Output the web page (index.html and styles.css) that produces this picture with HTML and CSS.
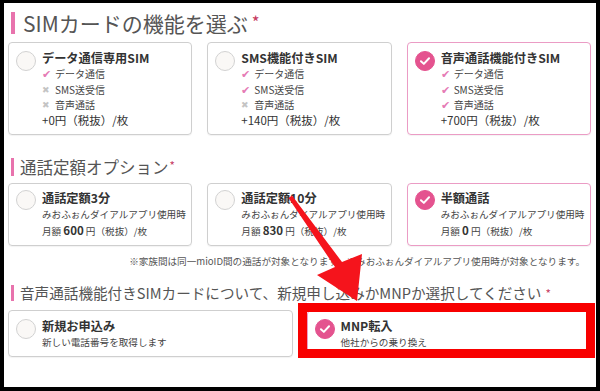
FILE: index.html
```html
<!DOCTYPE html>
<html lang="ja">
<head>
<meta charset="utf-8">
<link rel="stylesheet" href="styles.css">
</head>
<body>
<div class="frame">
  <h2 class="heading h-lg">SIMカードの機能を選ぶ<span class="req">*</span></h2>
  <div class="cards cards-3 row1">
    <div class="card">
      <span class="radio"></span>
      <div class="body">
        <div class="title">データ通信専用SIM</div>
        <div class="feat"><span class="ok">✔</span>データ通信</div>
        <div class="feat"><span class="ng">✖</span>SMS送受信</div>
        <div class="feat"><span class="ng">✖</span>音声通話</div>
        <div class="price">+0円（税抜）/枚</div>
      </div>
    </div>
    <div class="card">
      <span class="radio"></span>
      <div class="body">
        <div class="title">SMS機能付きSIM</div>
        <div class="feat"><span class="ok">✔</span>データ通信</div>
        <div class="feat"><span class="ok">✔</span>SMS送受信</div>
        <div class="feat"><span class="ng">✖</span>音声通話</div>
        <div class="price">+140円（税抜）/枚</div>
      </div>
    </div>
    <div class="card selected">
      <span class="radio on"><svg viewBox="0 0 20 20"><path d="M5.5 10.2 L8.7 13.2 L14.5 7" fill="none" stroke="#fff" stroke-width="2.2" stroke-linecap="round" stroke-linejoin="round"/></svg></span>
      <div class="body">
        <div class="title">音声通話機能付きSIM</div>
        <div class="feat"><span class="ok">✔</span>データ通信</div>
        <div class="feat"><span class="ok">✔</span>SMS送受信</div>
        <div class="feat"><span class="ok">✔</span>音声通話</div>
        <div class="price">+700円（税抜）/枚</div>
      </div>
    </div>
  </div>

  <h2 class="heading h-md">通話定額オプション<span class="req small">*</span></h2>
  <div class="cards cards-3 row2">
    <div class="card">
      <span class="radio"></span>
      <div class="body">
        <div class="title">通話定額3分</div>
        <div class="line">みおふぉんダイアルアプリ使用時</div>
        <div class="line">月額 <b>600</b> 円（税抜）/枚</div>
      </div>
    </div>
    <div class="card">
      <span class="radio"></span>
      <div class="body">
        <div class="title">通話定額10分</div>
        <div class="line">みおふぉんダイアルアプリ使用時</div>
        <div class="line">月額 <b>830</b> 円（税抜）/枚</div>
      </div>
    </div>
    <div class="card selected">
      <span class="radio on"><svg viewBox="0 0 20 20"><path d="M5.5 10.2 L8.7 13.2 L14.5 7" fill="none" stroke="#fff" stroke-width="2.2" stroke-linecap="round" stroke-linejoin="round"/></svg></span>
      <div class="body">
        <div class="title">半額通話</div>
        <div class="line">みおふぉんダイアルアプリ使用時</div>
        <div class="line">月額 <b>0</b> 円（税抜）/枚</div>
      </div>
    </div>
  </div>
  <p class="note">※家族間は同一mioID間の通話が対象となります。※みおふぉんダイアルアプリ使用時が対象となります。</p>

  <h2 class="heading h-sm">音声通話機能付きSIMカードについて、新規申し込みかMNPか選択してください<span class="req">*</span></h2>
  <div class="cards cards-2 row3">
    <div class="card">
      <span class="radio"></span>
      <div class="body">
        <div class="title">新規お申込み</div>
        <div class="line">新しい電話番号を取得します</div>
      </div>
    </div>
    <div class="card selected">
      <span class="radio on"><svg viewBox="0 0 20 20"><path d="M5.5 10.2 L8.7 13.2 L14.5 7" fill="none" stroke="#fff" stroke-width="2.2" stroke-linecap="round" stroke-linejoin="round"/></svg></span>
      <div class="body">
        <div class="title">MNP転入</div>
        <div class="line">他社からの乗り換え</div>
      </div>
    </div>
  </div>

  <div class="highlight"></div>
  <svg class="arrow" viewBox="0 0 600 391" width="600" height="391">
    <path d="M292 195.5 L342 262 L362 254 L357 301 L317 275 L335 267 L288.5 198 Z" fill="#f5141c"/>
  </svg>
</div>
</body>
</html>
```
FILE: styles.css
```css
* { box-sizing: border-box; }
html, body { margin: 0; padding: 0; }
body {
  background: #000;
  width: 600px;
  height: 391px;
  padding: 3px 4px 4px 4px;
  font-family: "Noto Sans CJK JP", "Noto Sans", sans-serif;
  color: #333;
  overflow: hidden;
}
.frame {
  position: relative;
  background: #fff;
  width: 592px;
  height: 384px;
  padding: 0 5px 0 4px;
  overflow: hidden;
}
.heading {
  margin: 0;
  font-weight: 400;
  color: #555;
  display: flex;
  align-items: center;
  border-left: 4px solid #e873ad;
  padding-left: 7px;
  margin-left: 3px;
  white-space: nowrap;
}
.h-lg { font-size: 21px; line-height: 22px; margin-top: 9px; padding-left: 8px; }
.h-md { font-size: 16.5px; line-height: 18px; margin-top: 23px; border-left-width: 3px; padding-left: 6px; }
.h-sm { font-size: 14.6px; line-height: 16px; margin-top: 17px; border-left-width: 3px; padding-left: 6px; }
.req { color: #c63a62; font-size: 0.8em; margin-left: 4px; align-self: flex-start; line-height: 1; margin-top: 2px; }
.req.small { font-size: 0.7em; margin-left: 1px; }

.cards { display: grid; gap: 15px; }
.cards-3 { grid-template-columns: repeat(3, 1fr); }
.cards-2 { grid-template-columns: repeat(2, 1fr); gap: 14px; }
.row1 { margin-top: 8px; }
.row2 { margin-top: 7px; }
.row3 { margin-top: 9px; }

.card {
  position: relative;
  display: flex;
  gap: 6px;
  border: 1px solid #cfcfcf;
  border-radius: 4px;
  padding: 7px 2px 6px 7px;
  box-shadow: 0 1px 1px rgba(0,0,0,0.05);
}
.card.selected { border-color: #eb9cc5; }
.radio {
  flex: none;
  width: 20px;
  height: 20px;
  border-radius: 50%;
  border: 1px solid #d2d2d2;
  background: #faf8f6;
  display: block;
}
.radio.on { background: #e4538f; border-color: #e4538f; }
.radio svg { display: block; width: 18px; height: 18px; }
.row1 .card .radio, .row3 .card .radio { margin-top: 1px; }

.body { display: flex; flex-direction: column; min-width: 0; }
.title { font-size: 12.2px; font-weight: 700; line-height: 16px; color: #333; white-space: nowrap; }
.feat { font-size: 10px; line-height: 15.5px; color: #444; display: flex; align-items: center; }
.ok { color: #e57bb5; font-size: 11px; width: 13px; }
.ng { color: #c4c4c4; font-size: 9px; width: 13px; }
.price { font-size: 11.5px; line-height: 15.5px; color: #333; }
.line { font-size: 9.6px; line-height: 16px; color: #444; white-space: nowrap; }
.line b { font-size: 11.5px; color: #333; }
.row1 .card { padding-bottom: 6px; }
.row2 .card { padding-top: 6px; padding-bottom: 6px; }

.note {
  margin: 8px 6px 0 0;
  text-align: right;
  font-size: 9.6px;
  line-height: 14px;
  color: #555;
  white-space: nowrap;
}
.highlight {
  position: absolute;
  left: 294px;
  top: 300px;
  width: 297px;
  height: 55px;
  border: 9px solid #f80000;
  pointer-events: none;
}
.arrow {
  position: absolute;
  left: -4px;
  top: -3px;
  pointer-events: none;
}
```
